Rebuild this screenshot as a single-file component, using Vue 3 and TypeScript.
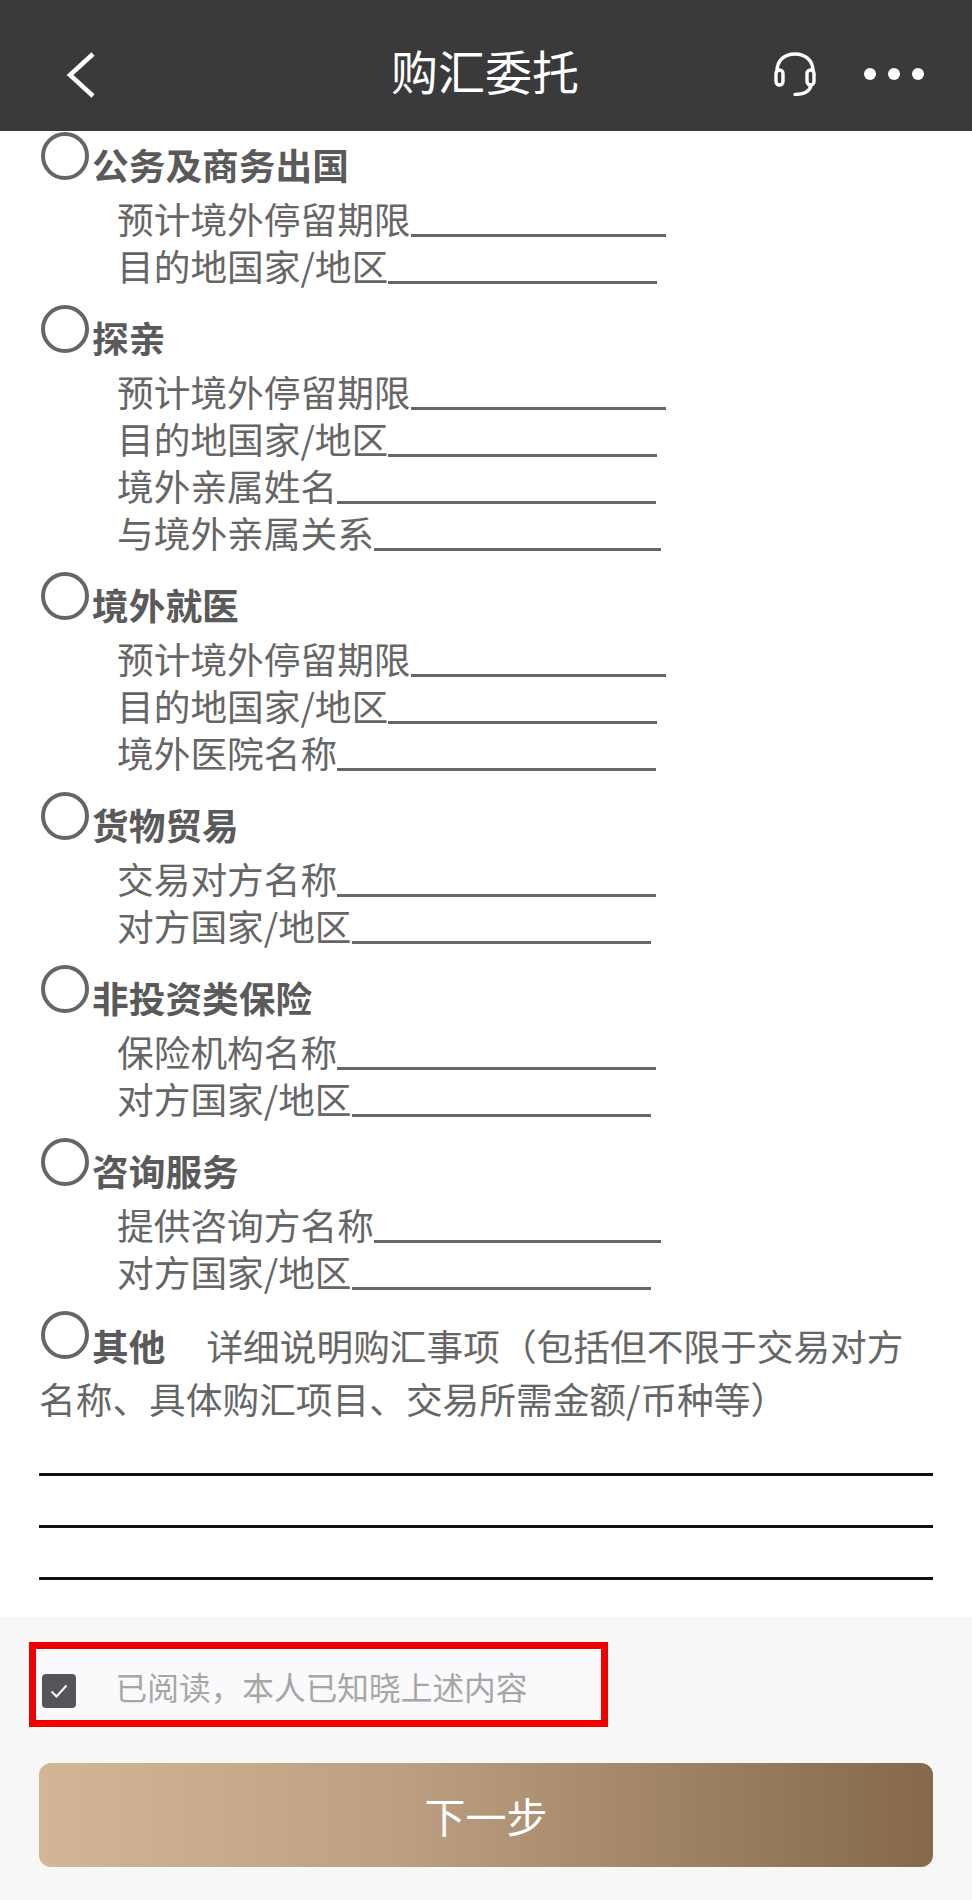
<script setup lang="ts">
interface Field { label: string; end: number }
interface Section { title: string; fields: Field[] }

const FIELD_LEFT = 117
const period = '预计境外停留期限'
const dest = '目的地国家/地区'
const other = '对方国家/地区'

const sections: Section[] = [
  { title: '公务及商务出国', fields: [{ label: period, end: 666 }, { label: dest, end: 657 }] },
  { title: '探亲', fields: [{ label: period, end: 666 }, { label: dest, end: 657 }, { label: '境外亲属姓名', end: 656 }, { label: '与境外亲属关系', end: 661 }] },
  { title: '境外就医', fields: [{ label: period, end: 666 }, { label: dest, end: 657 }, { label: '境外医院名称', end: 656 }] },
  { title: '货物贸易', fields: [{ label: '交易对方名称', end: 656 }, { label: other, end: 651 }] },
  { title: '非投资类保险', fields: [{ label: '保险机构名称', end: 656 }, { label: other, end: 651 }] },
  { title: '咨询服务', fields: [{ label: '提供咨询方名称', end: 661 }, { label: other, end: 651 }] },
]

function fieldWidth(f: Field): string {
  return `${f.end - FIELD_LEFT}px`
}
</script>

<template>
  <div class="page">
    <header class="nav">
      <svg class="back" viewBox="0 0 30 48" width="30" height="48" aria-hidden="true">
        <path d="M27 3 L4 24 L27 45" fill="none" stroke="#fff" stroke-width="4.5" />
      </svg>
      <h1 class="nav-title">购汇委托</h1>
      <div class="nav-actions">
        <svg class="headset" viewBox="0 0 42 44" width="42" height="44" aria-hidden="true">
          <g fill="none" stroke="#fff" stroke-width="3.4" stroke-linecap="round">
            <path d="M3 19 C3 8 11 2 21 2 C31 2 39 8 39 19" />
            <rect x="2" y="18" width="7" height="15" rx="3.5" />
            <rect x="33" y="18" width="7" height="15" rx="3.5" />
            <path d="M37 33 C36 39 30 42.4 21 42.4" />
          </g>
        </svg>
        <div class="dots"><i></i><i></i><i></i></div>
      </div>
    </header>

    <main class="form">
      <section v-for="s in sections" :key="s.title" class="section">
        <div class="head">
          <span class="radio"></span>
          <strong class="title">{{ s.title }}</strong>
        </div>
        <div class="fields">
          <div v-for="f in s.fields" :key="f.label" class="field" :style="{ width: fieldWidth(f) }">
            <span>{{ f.label }}</span>
            <span class="blank"></span>
          </div>
        </div>
      </section>

      <section class="section-other">
        <p class="other-text"><span class="radio inline"></span><strong class="title">其他</strong><span class="other-desc">详细说明购汇事项（包括但不限于交易对方名称、具体购汇项目、交易所需金额/币种等）</span></p>
        <div class="rules"><hr /><hr /><hr /></div>
      </section>
    </main>

    <footer class="footer">
      <div class="agree">
        <span class="check">
          <svg viewBox="0 0 18 14" width="18" height="14" aria-hidden="true">
            <path d="M1.5 7.5 L6.5 12.5 L16.5 1.5" fill="none" stroke="#fff" stroke-width="2" />
          </svg>
        </span>
        <span class="agree-text">已阅读，本人已知晓上述内容</span>
      </div>
      <button class="next" type="button">下一步</button>
    </footer>
  </div>
</template>

<style scoped>
.page {
  width: 972px;
  height: 1900px;
  display: flex;
  flex-direction: column;
  background: #fff;
  font-family: "Noto Sans CJK SC", "Liberation Sans", sans-serif;
  color: #666;
  overflow: hidden;
}
.nav {
  position: relative;
  flex: none;
  height: 131px;
  display: flex;
  align-items: center;
  justify-content: space-between;
  background: #3a3a3a;
  padding: 0 48px 0 66px;
  box-sizing: border-box;
}
.back { display: block; margin-top: 18px; }
.nav-title {
  position: absolute;
  left: 0;
  right: 0;
  top: 40px;
  margin: 0;
  padding-right: 2px;
  text-align: center;
  color: #fff;
  font-size: 47px;
  line-height: 60px;
  font-weight: 400;
}
.nav-actions {
  display: flex;
  align-items: center;
  gap: 48px;
  margin-top: 16px;
}
.headset { display: block; }
.dots { display: flex; gap: 12px; }
.dots i {
  display: block;
  width: 12px;
  height: 12px;
  border-radius: 50%;
  background: #fff;
}
.form {
  flex: none;
  padding: 1px 39px 0 39px;
}
.section { margin-bottom: 16px; }
.head {
  display: flex;
  align-items: flex-start;
  height: 63px;
}
.radio {
  flex: none;
  display: block;
  width: 48px;
  height: 48px;
  margin-left: 2px;
  box-sizing: border-box;
  border: 4px solid #666;
  border-radius: 50%;
}
.title {
  margin-left: 3px;
  margin-top: 10px;
  font-size: 36.7px;
  line-height: 44px;
  font-weight: 700;
  color: #5a5a5a;
}
.fields { padding-left: 78px; }
.field {
  display: flex;
  height: 47px;
  align-items: center;
  font-size: 36.7px;
  line-height: 47px;
  color: #666;
}
.blank {
  flex: 1;
  height: 36px;
  box-sizing: border-box;
  border-bottom: 3px solid #666;
}
.section-other { margin-top: 5px; }
.other-text {
  margin: 0;
  font-size: 36.7px;
  line-height: 53px;
  color: #666;
}
.radio.inline {
  display: inline-block;
  vertical-align: 2px;
}
.other-text .title { margin-top: 0; }
.other-desc { margin-left: 41px; }
.rules {
  margin-top: 48px;
  display: flex;
  flex-direction: column;
  gap: 49px;
}
.rules hr {
  margin: 0;
  height: 3px;
  border: 0;
  background: #111;
}
.footer {
  margin-top: auto;
  flex: none;
  height: 283px;
  box-sizing: border-box;
  padding: 25px 39px 0;
  background: #f7f7f7;
}
.agree {
  width: 579px;
  height: 85px;
  margin-left: -10.5px;
  box-sizing: border-box;
  border: 7px solid #f20000;
  background: #faf9fb;
  display: flex;
  align-items: center;
  padding-left: 6px;
}
.check {
  flex: none;
  width: 34px;
  height: 34px;
  margin-top: 12px;
  border-radius: 4px;
  background: #555458;
  display: flex;
  align-items: center;
  justify-content: center;
}
.agree-text {
  margin-left: 40px;
  margin-top: 2px;
  font-size: 31.7px;
  line-height: 40px;
  color: #a6a6a6;
}
.next {
  display: block;
  width: 894px;
  height: 104px;
  margin-top: 36px;
  padding: 0;
  border: 0;
  border-radius: 12px;
  background: linear-gradient(90deg, #d3b695 0%, #bda081 40%, #917657 85%, #86694b 100%);
  color: #fff;
  font-family: inherit;
  font-size: 41px;
  font-weight: 400;
}
</style>
